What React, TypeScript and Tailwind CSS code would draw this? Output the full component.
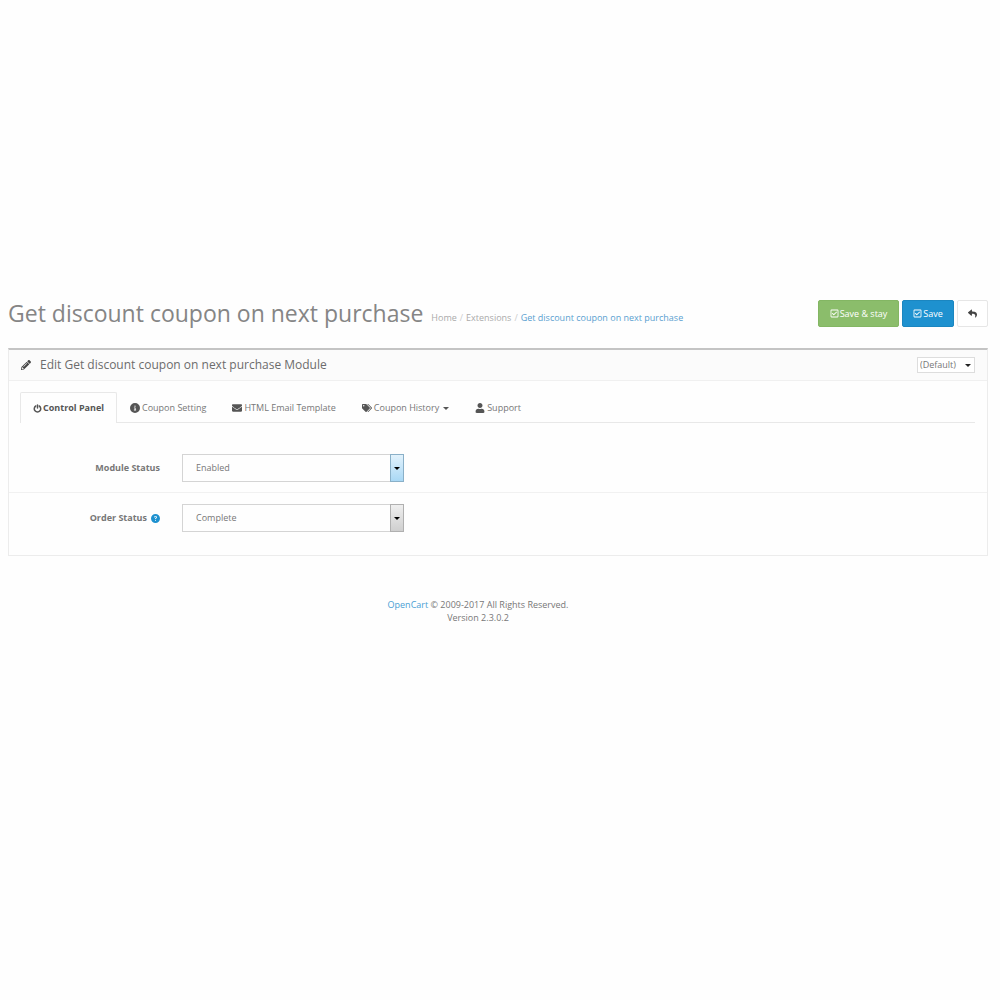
import React from "react";
import { FaPencilAlt, FaReply, FaTags, FaEnvelope, FaUser, FaRegCheckSquare } from "react-icons/fa";
import { FaCircleInfo, FaCircleQuestion } from "react-icons/fa6";

const Caret = ({ className }: { className?: string }) => (
  <svg viewBox="0 0 6 3" className={`w-[6px] h-[3px] flex-none fill-current ${className ?? ""}`}>
    <path d="M0 0h6L3 3z" />
  </svg>
);

const PowerIcon = ({ className }: { className?: string }) => (
  <svg viewBox="0 0 18 18" fill="none" stroke="currentColor" className={`w-[9px] h-[9px] flex-none ${className ?? ""}`}>
    <path d="M5.5 4A6.5 6.5 0 1 0 12.5 4" strokeWidth="3" strokeLinecap="round" />
    <path d="M9 2v6" strokeWidth="3" strokeLinecap="round" />
  </svg>
);

export default function App() {
  const tabs = [
    { label: "Coupon Setting", icon: FaCircleInfo, caret: false },
    { label: "HTML Email Template", icon: FaEnvelope, caret: false },
    { label: "Coupon History", icon: FaTags, caret: true },
    { label: "Support", icon: FaUser, caret: false },
  ];

  const fields = [
    {
      id: "module-status",
      label: "Module Status",
      options: ["Enabled", "Disabled"],
      help: false,
      arrow: "border-[#8ab0c8] bg-linear-to-b from-[#e2f2fc] to-[#a9d8f5]",
    },
    {
      id: "order-status",
      label: "Order Status",
      options: ["Complete", "Pending"],
      help: true,
      arrow: "border-[#b0b0b0] bg-linear-to-b from-[#efefef] to-[#cfcfcf]",
    },
  ];

  return (
    <div className="min-h-screen bg-[#fefefe] pt-[300px] pl-2 pr-3 font-['Open_Sans',sans-serif] text-[9px] text-[#777]">
      {/* Page header */}
      <header className="flex items-start">
        <h1 className="text-[23px] leading-[26px] text-[#858585] whitespace-nowrap">
          Get discount coupon on next purchase
        </h1>
        <nav aria-label="Breadcrumb" className="ml-2 pt-3 leading-3">
          <ol className="flex text-[#aaa] whitespace-nowrap">
            <li><a href="#">Home</a></li>
            <li className="before:content-['/'] before:px-[3px] before:text-[#ccc]"><a href="#">Extensions</a></li>
            <li className="before:content-['/'] before:px-[3px] before:text-[#ccc]">
              <a href="#" className="text-[#5a9fd0]">Get discount coupon on next purchase</a>
            </li>
          </ol>
        </nav>
        <div className="ml-auto flex gap-[3px] text-white">
          <button className="flex h-[27px] w-[81px] items-center justify-center rounded-xs bg-[#8bbd6b] border border-[#83b663]">
            <FaRegCheckSquare className="mr-px" />
            Save &amp; stay
          </button>
          <button className="flex h-[27px] w-[52px] items-center justify-center rounded-xs bg-[#1e91cf] border border-[#1b86c0]">
            <FaRegCheckSquare className="mr-px" />
            Save
          </button>
          <button aria-label="Back" className="flex h-[27px] w-[31px] items-center justify-center rounded-xs border border-[#e6e6e6] bg-white text-[#444]">
            <FaReply />
          </button>
        </div>
      </header>

      {/* Panel */}
      <main className="mt-[21px] border border-[#ececec] border-t-2 border-t-[#c4c4c4]">
        <div className="flex h-[31px] items-center border-b border-[#f0f0f0] bg-[#fbfbfb] px-3">
          <FaPencilAlt className="mr-[9px] text-[10px] text-[#444]" />
          <h2 className="text-xs text-[#6c6c6c]">Edit Get discount coupon on next purchase Module</h2>
          <div className="relative ml-auto flex items-center">
            <select aria-label="Store" className="h-4 w-[58px] appearance-none border border-[#ddd] bg-white pl-[2px]">
              <option>(Default)</option>
            </select>
            <Caret className="pointer-events-none absolute right-1 text-[#222]" />
          </div>
        </div>

        <div className="pt-[11px] pb-[23px]">
          {/* Tabs */}
          <div role="tablist" className="mr-3 ml-[11px] flex h-[31px] border-b border-[#e8e8e8]">
            <button role="tab" aria-selected="true" className="-mb-px flex w-[97px] items-center justify-center rounded-t-xs border border-b-0 border-[#e8e8e8] bg-[#fefefe] font-bold text-[#555]">
              <PowerIcon className="mr-px" />
              Control Panel
            </button>
            {tabs.map((tab) => (
              <button key={tab.label} role="tab" aria-selected="false" className="flex items-center px-[13px] pt-[2px] whitespace-nowrap">
                <tab.icon className="mr-[2px] text-[10px] text-[#555]" />
                {tab.label}
                {tab.caret && <Caret className="ml-1 text-[#555]" />}
              </button>
            ))}
          </div>

          {/* Fields */}
          <div className="mt-5">
            {fields.map((field) => (
              <div key={field.id} className="flex items-center border-t border-[#f1f1f1] py-[11px] first:border-t-0 first:pb-[10px] last:pb-0">
                <label htmlFor={field.id} className="flex w-[151px] items-center justify-end gap-1 font-bold text-[#777]">
                  {field.label}
                  {field.help && <FaCircleQuestion className="text-[#1e91cf]" />}
                </label>
                <div className="relative ml-[22px] w-[222px]">
                  <select id={field.id} className="block h-7 w-full appearance-none border border-[#d4d4d4] bg-[#fefefe] pl-[13px]">
                    {field.options.map((option) => (
                      <option key={option}>{option}</option>
                    ))}
                  </select>
                  <span className={`pointer-events-none absolute inset-y-0 right-0 flex w-[14px] items-center justify-center border text-black ${field.arrow}`}>
                    <Caret />
                  </span>
                </div>
              </div>
            ))}
          </div>
        </div>
      </main>

      <footer className="mt-[42px] pr-[40px] text-center leading-[13px]">
        <a href="#" className="text-[#4a9fd4]">OpenCart</a> © 2009-2017 All Rights Reserved.
        <br />
        Version 2.3.0.2
      </footer>
    </div>
  );
}
